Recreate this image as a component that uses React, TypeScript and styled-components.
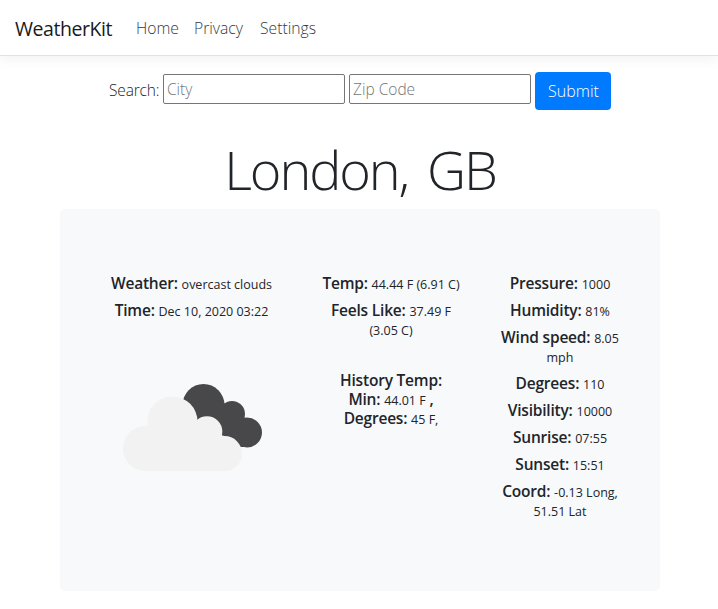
import React from 'react';
import styled, { createGlobalStyle } from 'styled-components';

const GlobalStyle = createGlobalStyle`
  *, *::before, *::after { box-sizing: border-box; }
  body {
    margin: 0;
    background: #fff;
    color: #212529;
    font: 300 16px/24px "Open Sans", "Noto Sans", sans-serif;
  }
`;

const Navbar = styled.header`
  display: flex;
  align-items: center;
  height: 56px;
  padding: 0 15px;
  border-bottom: 1px solid #dee2e6;
  box-shadow: 0 4px 12px rgba(0, 0, 0, 0.05);
`;

const Brand = styled.a`
  width: 98px;
  margin: 3px 23px 0 0;
  color: #1a1a1a;
  font-size: 19.5px;
  font-weight: 400;
  line-height: 30px;
  letter-spacing: -0.45px;
  white-space: nowrap;
`;

const Nav = styled.nav`
  display: flex;
  gap: 16px;
`;

const NavLink = styled.a<{ $width: number }>`
  width: ${({ $width }) => $width}px;
  color: #343a40;
  font-size: 15.7px;
  white-space: nowrap;
`;

const SearchForm = styled.form`
  display: flex;
  align-items: flex-start;
  gap: 4px;
  margin: 16px 0 0 109px;
`;

const SearchLabel = styled.label`
  width: 50px;
  margin-top: 6px;
  font-size: 15.5px;
  letter-spacing: -0.15px;
  white-space: nowrap;
`;

const Input = styled.input`
  width: 182px;
  height: 30px;
  margin-top: 2px;
  padding: 1px 3px;
  border: 1px solid #767676;
  border-radius: 2px;
  background: #fff;
  font: inherit;
  font-size: 15.5px;
  &::placeholder { color: #757575; opacity: 1; }
`;

const SubmitButton = styled.button`
  width: 76px;
  height: 38px;
  padding: 0 0 0 1px;
  border: 0;
  border-radius: 4px;
  background: #007bff;
  color: #fff;
  font: inherit;
`;

const Title = styled.h1`
  margin: 26px 0 0;
  padding-left: 2px;
  height: 73px;
  font-size: 54px;
  font-weight: 300;
  line-height: 67px;
  letter-spacing: -2.1px;
  word-spacing: 7px;
  text-align: center;
`;

const Card = styled.main`
  display: grid;
  grid-template-columns: 163px 138px 120px;
  column-gap: 49px;
  align-items: start;
  width: 600px;
  height: 382px;
  margin-left: 60px;
  padding: 65px 0 0 50px;
  border-radius: 5px;
  background: #f8f9fb;
`;

const Column = styled.section<{ $pull?: number }>`
  display: flex;
  flex-direction: column;
  align-items: center;
  gap: 8px;
  margin-left: ${({ $pull = 0 }) => -$pull}px;
  margin-right: ${({ $pull = 0 }) => $pull}px;
`;

const Fact = styled.h6<{ $top?: number }>`
  margin: ${({ $top = 0 }) => $top}px 0 0;
  font-size: 15.5px;
  font-weight: 600;
  line-height: 19px;
  letter-spacing: -0.2px;
  text-align: center;
  white-space: nowrap;
`;

const Value = styled.small`
  font-size: 12.5px;
  font-weight: 400;
  line-height: 1;
  letter-spacing: 0;
`;

const CloudIcon = styled.svg`
  width: 140px;
  height: 88px;
  margin: 56px 0 0 2px;
`;

const details: { label: string; lines: string[] }[] = [
  { label: 'Pressure:', lines: ['1000'] },
  { label: 'Humidity:', lines: ['81%'] },
  { label: 'Wind speed:', lines: ['8.05', 'mph'] },
  { label: 'Degrees:', lines: ['110'] },
  { label: 'Visibility:', lines: ['10000'] },
  { label: 'Sunrise:', lines: ['07:55'] },
  { label: 'Sunset:', lines: ['15:51'] },
  { label: 'Coord:', lines: ['-0.13 Long,', '51.51 Lat'] },
];

function OvercastClouds() {
  return (
    <CloudIcon viewBox="123 384 140 88" aria-hidden="true">
      <g fill="#48484a">
        <circle cx="203.5" cy="405" r="21" />
        <circle cx="232" cy="414" r="13" />
        <circle cx="247" cy="432.5" r="15" />
        <path d="M190 400H222L240 424L247 447H225Z" />
      </g>
      <g fill="#f2f2f2">
        <circle cx="172.5" cy="421.5" r="25" />
        <circle cx="207" cy="431.5" r="15.3" />
        <circle cx="145.5" cy="448.5" r="22.5" />
        <circle cx="224.5" cy="453.5" r="17.5" />
        <path d="M148 426L172 410L207 430L224 436V471H145.5Z" />
      </g>
    </CloudIcon>
  );
}

export default function App() {
  return (
    <>
      <GlobalStyle />
      <Navbar>
        <Brand>WeatherKit</Brand>
        <Nav>
          <NavLink $width={42}>Home</NavLink>
          <NavLink $width={50}>Privacy</NavLink>
          <NavLink $width={56}>Settings</NavLink>
        </Nav>
      </Navbar>
      <SearchForm>
        <SearchLabel>Search:</SearchLabel>
        <Input placeholder="City" />
        <Input placeholder="Zip Code" />
        <SubmitButton type="button">Submit</SubmitButton>
      </SearchForm>
      <Title>London, GB</Title>
      <Card>
        <Column>
          <Fact>Weather: <Value>overcast clouds</Value></Fact>
          <Fact>Time: <Value>Dec 10, 2020 03:22</Value></Fact>
          <OvercastClouds />
        </Column>
        <Column>
          <Fact>Temp: <Value>44.44 F (6.91 C)</Value></Fact>
          <Fact>Feels Like: <Value>37.49 F<br />(3.05 C)</Value></Fact>
          <Fact $top={24}>
            History Temp:<br />
            Min: <Value>44.01 F</Value> ,<br />
            Degrees: <Value>45 F,</Value>
          </Fact>
        </Column>
        <Column $pull={9}>
          {details.map(({ label, lines }) => (
            <Fact key={label}>
              {label}{' '}
              <Value>{lines[0]}{lines[1] && <><br />{lines[1]}</>}</Value>
            </Fact>
          ))}
        </Column>
      </Card>
    </>
  );
}
